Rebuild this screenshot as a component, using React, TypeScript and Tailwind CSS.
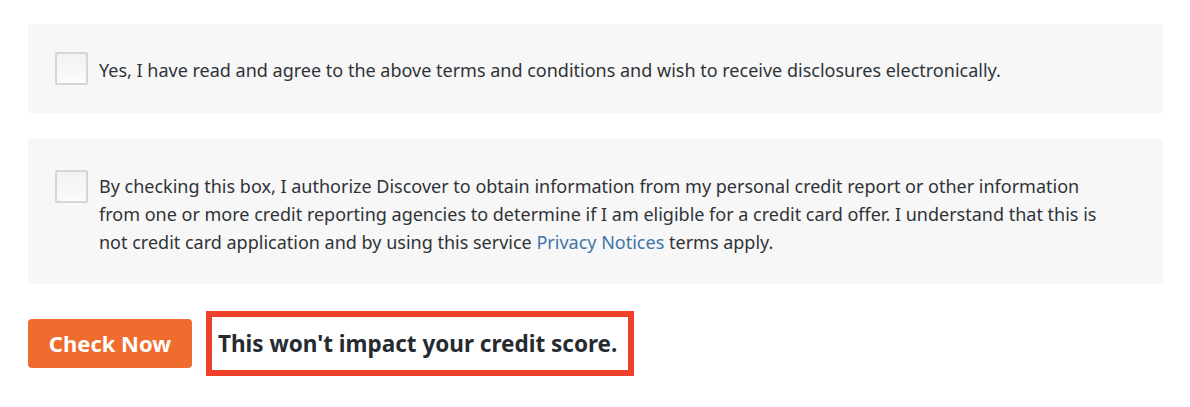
export default function App() {
  const font = { fontFamily: '"Noto Sans", "Open Sans", sans-serif' };
  return (
    <div className="w-[1190px] h-[407px] bg-white" style={font}>
      <div className="pt-[24px] px-[28px] pr-[27px] flex flex-col">
        <div className="bg-[#f7f7f7] h-[89px] flex items-center pl-[27px]">
          <div className="w-[33px] h-[33px] border-2 border-[#d6d6d6] rounded-[2px] bg-gradient-to-b from-[#f0f2f4] to-[#fbfcfc] shrink-0" />
          <p className="ml-[11px] mt-[3px] text-[18px] leading-[28px] text-[#2f3337]">
            Yes, I have read and agree to the above terms and conditions and wish to receive disclosures electronically.
          </p>
        </div>
        <div className="bg-[#f7f7f7] mt-[26px] h-[145px] flex items-start pl-[27px] pt-[31px]">
          <div className="w-[33px] h-[33px] border-2 border-[#d6d6d6] rounded-[2px] bg-gradient-to-b from-[#f0f2f4] to-[#fbfcfc] shrink-0" />
          <p className="ml-[11px] mt-[2px] w-[1000px] text-[18px] leading-[28px] text-[#2f3337]">
            By checking this box, I authorize Discover to obtain information from my personal credit report or other information from one or more credit reporting agencies to determine if I am eligible for a credit card offer. I understand that this is not credit card application and by using this service <span className="text-[#3d75a8]">Privacy Notices</span> terms apply.
          </p>
        </div>
        <div className="mt-[27px] flex items-center">
          <button className="w-[164px] h-[49px] rounded-[4px] bg-[#f06b2e] text-white font-bold text-[22px]">
            Check Now
          </button>
          <div className="ml-[14px] w-[428px] h-[65px] border-[6px] border-[#ee402a] flex items-center pl-[6px] text-[22.5px] font-bold text-[#262b31]">
            This won't impact your credit score.
          </div>
        </div>
      </div>
    </div>
  );
}
